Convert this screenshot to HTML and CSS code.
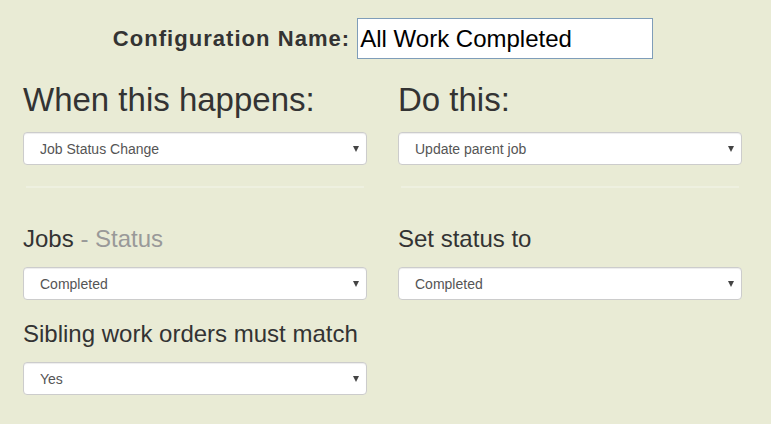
FILE: index.html
```html
<!DOCTYPE html>
<html lang="en">
<head>
    <meta charset="UTF-8">
    <title>Configuration</title>
    <link rel="stylesheet" href="styles.css">
</head>
<body>
    <div class="page">
        <div class="name-row">
            <label for="configName">Configuration Name:</label>
            <input type="text" id="configName" value="All Work Completed">
        </div>

        <div class="columns">
            <div class="col">
                <h2>When this happens:</h2>
                <div class="select-wrap">
                    <select>
                        <option>Job Status Change</option>
                    </select>
                </div>
                <hr>
                <h3>Jobs <small>- Status</small></h3>
                <div class="select-wrap">
                    <select>
                        <option>Completed</option>
                    </select>
                </div>
                <h3 class="follow">Sibling work orders must match</h3>
                <div class="select-wrap">
                    <select>
                        <option>Yes</option>
                    </select>
                </div>
            </div>

            <div class="col">
                <h2>Do this:</h2>
                <div class="select-wrap">
                    <select>
                        <option>Update parent job</option>
                    </select>
                </div>
                <hr>
                <h3>Set status to</h3>
                <div class="select-wrap">
                    <select>
                        <option>Completed</option>
                    </select>
                </div>
            </div>
        </div>
    </div>
</body>
</html>
```

FILE: styles.css
```css
body {
    margin: 0;
    background: #e9ebd5;
    font-family: "Liberation Sans", Arial, sans-serif;
    color: #333;
}

.page {
    padding: 18px 0 0 23px;
}

.name-row {
    display: flex;
    justify-content: center;
    align-items: center;
    gap: 7px;
    margin-left: -23px;
    padding-right: 5px;
}

.name-row label {
    font-size: 22px;
    font-weight: bold;
    letter-spacing: 1.05px;
    color: #333;
}

.name-row input {
    width: 296px;
    height: 41px;
    box-sizing: border-box;
    border: 1px solid #7f9db9;
    padding: 0 2px;
    font-family: "Liberation Sans", Arial, sans-serif;
    font-size: 24px;
    color: #000;
    background: #fff;
}

.columns {
    display: grid;
    grid-template-columns: 344px 344px;
    gap: 31px;
}

h2 {
    font-size: 33px;
    font-weight: normal;
    margin: 23px 0 14px;
    line-height: 36px;
}

h3 {
    font-size: 24px;
    font-weight: normal;
    margin: 38px 0 15px;
    line-height: 26px;
}

h3.follow {
    margin-top: 21px;
}

h3 small {
    color: #999;
    font-size: 24px;
}

hr {
    border: 0;
    border-top: 2px solid #eef0e0;
    margin: 21px 3px 0;
}

.select-wrap {
    position: relative;
}

.select-wrap::after {
    content: "";
    position: absolute;
    right: 8px;
    top: 14px;
    border-left: 3px solid transparent;
    border-right: 3px solid transparent;
    border-top: 6px solid #444;
    pointer-events: none;
}

select {
    appearance: none;
    -webkit-appearance: none;
    width: 100%;
    height: 33px;
    padding: 0 16px;
    border: 1px solid #ccc;
    border-radius: 4px;
    background: #fff;
    box-shadow: inset 0 1px 1px rgba(0, 0, 0, 0.075);
    font-family: "Liberation Sans", Arial, sans-serif;
    font-size: 14px;
    color: #555;
}
```
